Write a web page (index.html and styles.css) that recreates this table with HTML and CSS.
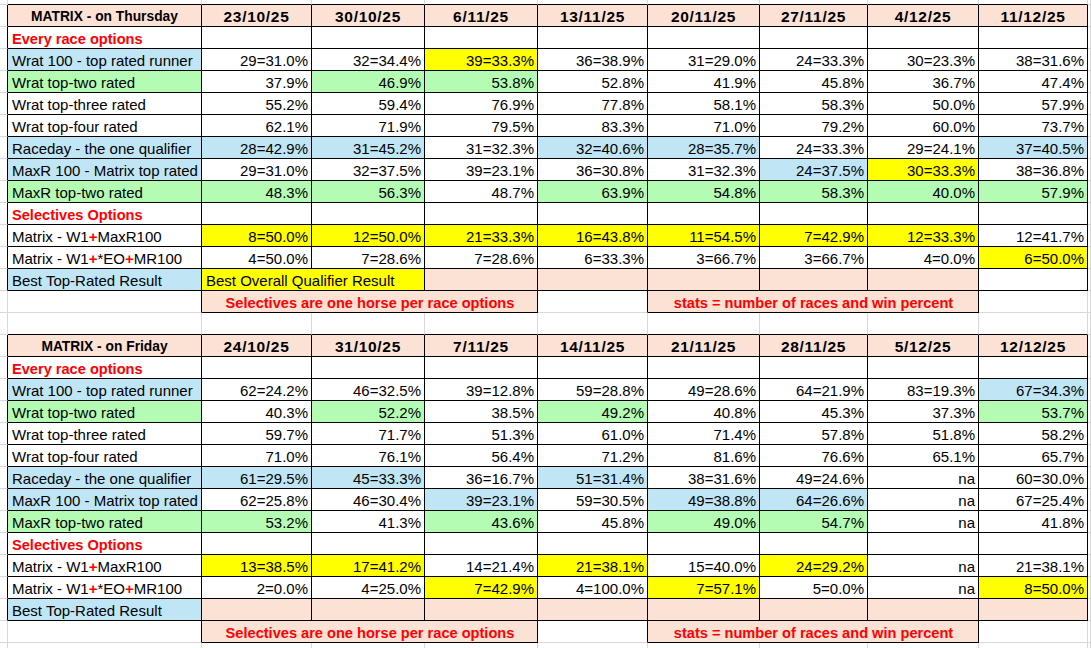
FILE: index.html
```html
<!DOCTYPE html>
<html>
<head>
<meta charset="utf-8">
<title>Matrix</title>
<link rel="stylesheet" href="styles.css">
</head>
<body>
<table class="sheet">
<colgroup>
<col class="c-m"><col class="c-1"><col class="c-2"><col class="c-3"><col class="c-4"><col class="c-5"><col class="c-6"><col class="c-7"><col class="c-8"><col class="c-9"><col class="c-t">
</colgroup>
<tbody>
<tr class="edge"><td class="m gr gb"></td><td class="gr"></td><td class="gr"></td><td class="gr"></td><td class="gr"></td><td class="gr"></td><td class="gr"></td><td class="gr"></td><td class="gr"></td><td class="gr"></td><td class="t gr gb"></td></tr>

<tr><td class="m gb"></td><td class="hd lab">MATRIX - on Thursday</td><td class="hd">23/10/25</td><td class="hd">30/10/25</td><td class="hd">6/11/25</td><td class="hd">13/11/25</td><td class="hd">20/11/25</td><td class="hd">27/11/25</td><td class="hd">4/12/25</td><td class="hd">11/12/25</td><td class="t gr gb"></td></tr>
<tr><td class="m gb"></td><td class="l red">Every race options</td><td></td><td></td><td></td><td></td><td></td><td></td><td></td><td></td><td class="t gr gb"></td></tr>
<tr><td class="m gb"></td><td class="l bl">Wrat 100 - top rated runner</td><td>29=31.0%</td><td>32=34.4%</td><td class="yl">39=33.3%</td><td>36=38.9%</td><td>31=29.0%</td><td>24=33.3%</td><td>30=23.3%</td><td>38=31.6%</td><td class="t gr gb"></td></tr>
<tr><td class="m gb"></td><td class="l gn">Wrat top-two rated</td><td>37.9%</td><td class="gn">46.9%</td><td class="gn">53.8%</td><td>52.8%</td><td>41.9%</td><td>45.8%</td><td>36.7%</td><td>47.4%</td><td class="t gr gb"></td></tr>
<tr><td class="m gb"></td><td class="l">Wrat top-three rated</td><td>55.2%</td><td>59.4%</td><td>76.9%</td><td>77.8%</td><td>58.1%</td><td>58.3%</td><td>50.0%</td><td>57.9%</td><td class="t gr gb"></td></tr>
<tr><td class="m gb"></td><td class="l">Wrat top-four rated</td><td>62.1%</td><td>71.9%</td><td>79.5%</td><td>83.3%</td><td>71.0%</td><td>79.2%</td><td>60.0%</td><td>73.7%</td><td class="t gr gb"></td></tr>
<tr><td class="m gb"></td><td class="l bl">Raceday - the one qualifier</td><td class="bl">28=42.9%</td><td class="bl">31=45.2%</td><td>31=32.3%</td><td class="bl">32=40.6%</td><td class="bl">28=35.7%</td><td>24=33.3%</td><td>29=24.1%</td><td class="bl">37=40.5%</td><td class="t gr gb"></td></tr>
<tr><td class="m gb"></td><td class="l bl">MaxR 100 - Matrix top rated</td><td>29=31.0%</td><td>32=37.5%</td><td>39=23.1%</td><td>36=30.8%</td><td>31=32.3%</td><td class="bl">24=37.5%</td><td class="yl">30=33.3%</td><td>38=36.8%</td><td class="t gr gb"></td></tr>
<tr><td class="m gb"></td><td class="l gn">MaxR top-two rated</td><td class="gn">48.3%</td><td class="gn">56.3%</td><td>48.7%</td><td class="gn">63.9%</td><td class="gn">54.8%</td><td class="gn">58.3%</td><td class="gn">40.0%</td><td class="gn">57.9%</td><td class="t gr gb"></td></tr>
<tr><td class="m gb"></td><td class="l red">Selectives Options</td><td></td><td></td><td></td><td></td><td></td><td></td><td></td><td></td><td class="t gr gb"></td></tr>
<tr><td class="m gb"></td><td class="l">Matrix - W1<span class="p">+</span>MaxR100</td><td class="yl">8=50.0%</td><td class="yl">12=50.0%</td><td class="yl">21=33.3%</td><td class="yl">16=43.8%</td><td class="yl">11=54.5%</td><td class="yl">7=42.9%</td><td class="yl">12=33.3%</td><td>12=41.7%</td><td class="t gr gb"></td></tr>
<tr><td class="m gb"></td><td class="l">Matrix - W1<span class="p">+</span>*EO<span class="p">+</span>MR100</td><td>4=50.0%</td><td>7=28.6%</td><td>7=28.6%</td><td>6=33.3%</td><td>3=66.7%</td><td>3=66.7%</td><td>4=0.0%</td><td class="yl">6=50.0%</td><td class="t gr gb"></td></tr>
<tr><td class="m gb"></td><td class="l bl">Best Top-Rated Result</td><td class="l yl" colspan="2">Best Overall Qualifier Result</td><td class="pk"></td><td class="pk"></td><td class="pk"></td><td class="pk"></td><td class="pk"></td><td></td><td class="t gr gb"></td></tr>
<tr><td class="m gr gb"></td><td class="gb"></td><td class="note" colspan="3">Selectives are one horse per race options</td><td class="gb"></td><td class="note" colspan="3">stats = number of races and win percent</td><td class="gr gb"></td><td class="t gr gb"></td></tr>

<tr class="gap"><td class="m gr gb"></td><td class="gr"></td><td class="gr"></td><td class="gr"></td><td class="gr"></td><td class="gr"></td><td class="gr"></td><td class="gr"></td><td class="gr"></td><td class="gr"></td><td class="t gr gb"></td></tr>

<tr><td class="m gb"></td><td class="hd lab">MATRIX - on Friday</td><td class="hd">24/10/25</td><td class="hd">31/10/25</td><td class="hd">7/11/25</td><td class="hd">14/11/25</td><td class="hd">21/11/25</td><td class="hd">28/11/25</td><td class="hd">5/12/25</td><td class="hd">12/12/25</td><td class="t gr gb"></td></tr>
<tr><td class="m gb"></td><td class="l red">Every race options</td><td></td><td></td><td></td><td></td><td></td><td></td><td></td><td></td><td class="t gr gb"></td></tr>
<tr><td class="m gb"></td><td class="l bl">Wrat 100 - top rated runner</td><td>62=24.2%</td><td>46=32.5%</td><td>39=12.8%</td><td>59=28.8%</td><td>49=28.6%</td><td>64=21.9%</td><td>83=19.3%</td><td class="bl">67=34.3%</td><td class="t gr gb"></td></tr>
<tr><td class="m gb"></td><td class="l gn">Wrat top-two rated</td><td>40.3%</td><td class="gn">52.2%</td><td>38.5%</td><td class="gn">49.2%</td><td>40.8%</td><td>45.3%</td><td>37.3%</td><td class="gn">53.7%</td><td class="t gr gb"></td></tr>
<tr><td class="m gb"></td><td class="l">Wrat top-three rated</td><td>59.7%</td><td>71.7%</td><td>51.3%</td><td>61.0%</td><td>71.4%</td><td>57.8%</td><td>51.8%</td><td>58.2%</td><td class="t gr gb"></td></tr>
<tr><td class="m gb"></td><td class="l">Wrat top-four rated</td><td>71.0%</td><td>76.1%</td><td>56.4%</td><td>71.2%</td><td>81.6%</td><td>76.6%</td><td>65.1%</td><td>65.7%</td><td class="t gr gb"></td></tr>
<tr><td class="m gb"></td><td class="l bl">Raceday - the one qualifier</td><td class="bl">61=29.5%</td><td class="bl">45=33.3%</td><td>36=16.7%</td><td class="bl">51=31.4%</td><td>38=31.6%</td><td>49=24.6%</td><td>na</td><td>60=30.0%</td><td class="t gr gb"></td></tr>
<tr><td class="m gb"></td><td class="l bl">MaxR 100 - Matrix top rated</td><td>62=25.8%</td><td>46=30.4%</td><td class="bl">39=23.1%</td><td>59=30.5%</td><td class="bl">49=38.8%</td><td class="bl">64=26.6%</td><td>na</td><td>67=25.4%</td><td class="t gr gb"></td></tr>
<tr><td class="m gb"></td><td class="l gn">MaxR top-two rated</td><td class="gn">53.2%</td><td>41.3%</td><td class="gn">43.6%</td><td>45.8%</td><td class="gn">49.0%</td><td class="gn">54.7%</td><td>na</td><td>41.8%</td><td class="t gr gb"></td></tr>
<tr><td class="m gb"></td><td class="l red">Selectives Options</td><td></td><td></td><td></td><td></td><td></td><td></td><td></td><td></td><td class="t gr gb"></td></tr>
<tr><td class="m gb"></td><td class="l">Matrix - W1<span class="p">+</span>MaxR100</td><td class="yl">13=38.5%</td><td class="yl">17=41.2%</td><td>14=21.4%</td><td class="yl">21=38.1%</td><td>15=40.0%</td><td class="yl">24=29.2%</td><td>na</td><td>21=38.1%</td><td class="t gr gb"></td></tr>
<tr><td class="m gb"></td><td class="l">Matrix - W1<span class="p">+</span>*EO<span class="p">+</span>MR100</td><td>2=0.0%</td><td>4=25.0%</td><td class="yl">7=42.9%</td><td>4=100.0%</td><td class="yl">7=57.1%</td><td>5=0.0%</td><td>na</td><td class="yl">8=50.0%</td><td class="t gr gb"></td></tr>
<tr><td class="m gb"></td><td class="l bl">Best Top-Rated Result</td><td class="pk"></td><td class="pk"></td><td class="pk"></td><td class="pk"></td><td class="pk"></td><td class="pk"></td><td class="pk"></td><td class="pk"></td><td class="t gr gb"></td></tr>
<tr><td class="m gr gb"></td><td class="gb"></td><td class="note" colspan="3">Selectives are one horse per race options</td><td class="gb"></td><td class="note" colspan="3">stats = number of races and win percent</td><td class="gr gb"></td><td class="t gr gb"></td></tr>

<tr class="tail"><td class="m gr gb"></td><td class="gr gb"></td><td class="gr gb"></td><td class="gr gb"></td><td class="gr gb"></td><td class="gr gb"></td><td class="gr gb"></td><td class="gr gb"></td><td class="gr gb"></td><td class="gr gb"></td><td class="t gr gb"></td></tr>
</tbody>
</table>
</body>
</html>
```
FILE: styles.css
```css
html, body {
  margin: 0;
  padding: 0;
  background: #ffffff;
  overflow: hidden;
}

.sheet {
  border-collapse: separate;
  border-spacing: 0;
  table-layout: fixed;
  width: 1091px;
  font-family: "Liberation Sans", Arial, sans-serif;
  font-size: 15px;
  color: #000000;
}

.c-m { width: 8px; }
.c-1 { width: 194px; }
.c-2 { width: 110px; }
.c-3 { width: 113px; }
.c-4 { width: 113px; }
.c-5 { width: 110px; }
.c-6 { width: 112px; }
.c-7 { width: 108px; }
.c-8 { width: 111px; }
.c-9 { width: 109px; }
.c-t { width: 3px; }

.sheet td {
  box-sizing: border-box;
  height: 22px;
  padding: 3px 3px 0 4px;
  line-height: 18px;
  border: 0;
  border-right: 1px solid #000000;
  border-bottom: 1px solid #000000;
  text-align: right;
  white-space: nowrap;
  overflow: hidden;
  vertical-align: top;
}

.sheet .gr { border-right-color: #d9d9d9; }
.sheet .gb { border-bottom-color: #d9d9d9; }

.sheet .m,
.sheet .t {
  padding: 0;
}

.sheet tr.edge td {
  height: 5px;
  padding: 0;
}

.sheet tr.tail td {
  height: 8px;
  padding: 0;
}

.sheet .l {
  text-align: left;
  padding-left: 4px;
}

.sheet .hd {
  background: #fbe2d5;
  font-weight: bold;
  font-size: 15.5px;
  text-align: center;
  letter-spacing: 0.7px;
  padding-left: 3px;
  padding-right: 3px;
}

.sheet .hd.lab {
  font-size: 13.8px;
  letter-spacing: 0;
}

.sheet .red {
  color: #ff0000;
  font-weight: bold;
  font-size: 14.6px;
}

.sheet .p {
  color: #ff0000;
  font-weight: bold;
}

.sheet .bl { background: #c0e6f5; }
.sheet .gn { background: #b4fcb4; }
.sheet .yl { background: #ffff00; }
.sheet .pk { background: #fbe2d5; }

.sheet .note {
  background: #fbe2d5;
  color: #ff0000;
  font-weight: bold;
  font-size: 14.6px;
  text-align: center;
}
```
